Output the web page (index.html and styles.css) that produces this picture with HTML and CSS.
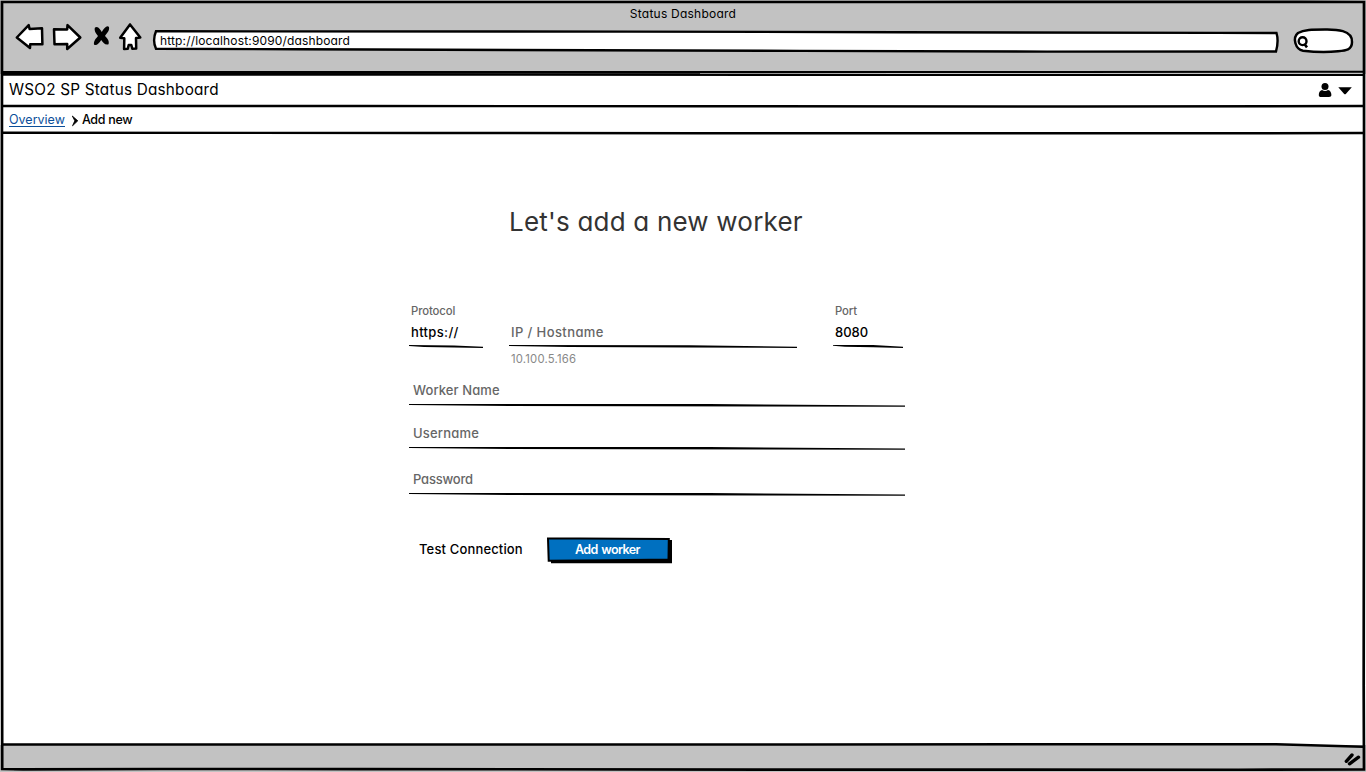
FILE: index.html
```html
<!DOCTYPE html>
<html lang="en">
<head>
<meta charset="utf-8">
<title>Status Dashboard</title>
<link rel="stylesheet" href="styles.css">
</head>
<body>
<div class="window">
  <header class="chrome">
    <div class="window-title"><span>Status Dashboard</span></div>
    <div class="toolbar">
      <svg class="nav" width="130" height="32" viewBox="14 21 130 32">
        <g fill="#fff" stroke="#000" stroke-width="2.5" stroke-linejoin="round">
          <path d="M16.8 37.5 28.7 25.2 29.6 29 42 28.3 42.4 44.3 30.2 44.2 30 48 Z"/>
          <path d="M80.3 37.5 67.5 25.2 67.2 29.4 54 29.3 54.5 44.2 67.2 44 67.2 49 Z"/>
          <path d="M130 24.4 120.2 37.7 124.3 38.2 124.1 49.1 127.8 48.8 128.7 45 131.3 45 132.3 48.8 136.2 48.6 136 38 140.3 37.5 Z"/>
        </g>
        <path d="M95 27.5C98 25.5 100 29 101.8 32 104 28 107 25 109 27 109.8 31 106.5 33.5 105 36 107.7 38.5 109.6 41.5 108.5 44.3 105.3 45.5 102.8 42.4 101.2 40 99 43.5 96 46.5 94 44.4 93.5 41 96 38.5 98 36 96 33.5 93.8 30.5 95 27.5Z"/>
      </svg>
      <div class="address">
        <svg class="sketch" width="1128" height="26" viewBox="152 28 1128 26"><path d="M156 31.3 C420 31.8 650 31.2 900 32.2 S1180 32.6 1276.5 33 C1278.3 39 1277.5 46 1276 51.5 C1100 51.8 980 51.8 800 50.9 S380 49.6 156 48.8 C153.4 43 154 36 156 31.3Z" fill="#fff" stroke="#000" stroke-width="2.4"/></svg>
        <span>http://localhost:9090/dashboard</span>
      </div>
      <svg class="search" width="64" height="30" viewBox="1292 26 64 30">
        <path d="M1298 33C1304 29.5 1312 29.5 1325 29.5 1336 29.3 1352.5 30 1352 42 1352 50 1346 50.5 1338 51.2 1325 52.6 1310 51.5 1303 50.7 1295.5 49.5 1292 38 1298 33Z" fill="#fff" stroke="#000" stroke-width="2.5"/>
        <circle cx="1302.6" cy="41.2" r="3.9" fill="#fff" stroke="#000" stroke-width="2.4"/>
        <path d="M1304.4 44 1307 47.4" stroke="#000" stroke-width="2.6"/>
      </svg>
    </div>
  </header>
  <div class="appbar">
    <div class="brand">WSO2 SP Status Dashboard</div>
    <svg class="user" width="36" height="18" viewBox="1317 81 36 18">
      <circle cx="1325" cy="86.5" r="3.5"/>
      <path d="M1322 90C1319.8 90.5 1318.8 92.5 1318.8 95 1318.8 96.5 1319.7 97 1321 97H1329C1330.5 97 1331.4 96.2 1331.4 95 1331.3 92.3 1330.3 90.5 1328 90 1326.2 91.2 1324 91.2 1322 90Z"/>
      <path d="M1338.3 87.2H1351.8L1345.8 94Q1345 94.7 1344.2 94Z"/>
    </svg>
  </div>
  <nav class="crumbs">
    <a class="crumb-link" href="#">Overview</a>
    <svg class="chevron" width="8" height="12" viewBox="71 115 8 12"><path d="M72.3 116 77.8 120.8 72.5 125.8 74.8 120.8Z" stroke="#000" stroke-width=".8" stroke-linejoin="round"/></svg>
    <span class="crumb-current">Add new</span>
  </nav>
  <main class="page">
    <h1 class="heading">Let's add a new worker</h1>
    <form class="form">
      <div class="row">
        <div class="field protocol">
          <div class="label">Protocol</div>
          <div class="value scheme">https://</div>
          <svg class="rule" width="74" height="4" viewBox="0 0 74 4"><path d="M0 0 45 .5 74 1.8V3.1L45 2.6 15 1.9 0 1Z"/></svg>
        </div>
        <div class="field host">
          <div class="label"></div>
          <div class="value hint spaced">IP / Hostname</div>
          <svg class="rule" width="288" height="4" viewBox="0 0 288 4"><path d="M0 0 180 .2 288 1.8V3L180 2.5 60 2 0 1Z"/></svg>
          <div class="example">10.100.5.166</div>
        </div>
        <div class="field port">
          <div class="label">Port</div>
          <div class="value">8080</div>
          <svg class="rule" width="70" height="4" viewBox="0 0 70 4"><path d="M0 0 40 0 70 1.8V3L40 2.3 12 1.8 0 .8Z"/></svg>
        </div>
      </div>
      <div class="field wide worker"><div class="value hint">Worker Name</div><svg class="rule" width="496" height="4" viewBox="0 0 496 4"><path d="M0 0 300 0 496 1.4V2.8L350 2.5 100 2 0 1Z"/></svg></div>
      <div class="field wide username"><div class="value hint">Username</div><svg class="rule" width="496" height="4" viewBox="0 0 496 4"><path d="M0 0 300 0 496 1.4V2.8L350 2.5 100 2 0 1Z"/></svg></div>
      <div class="field wide password"><div class="value hint">Password</div><svg class="rule" width="496" height="4" viewBox="0 0 496 4"><path d="M0 0 300 0 496 1.4V2.8L350 2.5 100 2 0 1Z"/></svg></div>
      <div class="actions">
        <span class="test">Test Connection</span>
        <div class="button">
          <svg class="sketch" width="126" height="28" viewBox="546 537 126 28">
            <path d="M551 540H672V563.3H551Z"/>
            <path d="M548 538.6 580 538.5 668.8 539 668.5 559.5 610 560.2 548.7 560.7Z" fill="#0070c0" stroke="#000" stroke-width="2"/>
          </svg>
          <span>Add worker</span>
        </div>
      </div>
    </form>
  </main>
  <footer class="status"></footer>
  <svg class="frame" width="1366" height="772" viewBox="0 0 1366 772" fill="none" stroke="#000">
    <path d="M2 2C300 1.6 600 2.2 900 2S1250 1.7 1364 2C1363.6 150 1364.5 260 1364 400S1363.4 650 1364 769.3C1200 770.3 1050 769.4 860 769.7S400 768.7 160 769 80 769.8 2.2 769C2.2 600 1.7 500 1.8 350S1.8 100 2 2Z" stroke-width="2.7"/>
    <path d="M3 72C200 71.6 400 71.6 700 72S1100 71.5 1363 71.8" stroke-width="2"/>
    <path d="M3 74.6C300 74.8 700 74.4 900 75S1250 75 1363 75" stroke-width="2.2"/>
    <path d="M3 72.6 240 72.9 700 73.4 240 74.3 3 74Z" fill="#000" stroke-width=".5"/>
    <path d="M3 106C200 106.4 500 105.5 700 106.2S1150 106.6 1363 106" stroke-width="2.4"/>
    <path d="M3 132.8C300 133.4 450 132.5 700 133.2S1150 133.5 1363 133" stroke-width="2.4"/>
    <path d="M3 744.4C300 745 500 743.8 800 744.4S1200 743.5 1276 744.3L1363 746.7" stroke-width="2.5"/>
    <path d="M1346.3 761.3 1352 755M1349.5 763.8 1358.5 757.2" stroke-width="3.4" stroke-linecap="round"/>
  </svg>
</div>
</body>
</html>
```
FILE: styles.css
```css
* { box-sizing: border-box; }
body { margin: 0; background: #fff; color: #000; font-family: Inter, "Open Sans", sans-serif; font-feature-settings: "cv11", "ss03"; font-size: 12.5px; }
svg { display: block; flex: none; }
.window { position: relative; width: 1366px; height: 772px; display: flex; flex-direction: column; overflow: hidden; white-space: nowrap; }
.frame { position: absolute; inset: 0; pointer-events: none; }
.chrome { height: 74px; background: #c2c2c2; }
.window-title { height: 21px; padding-top: 6px; line-height: 15px; text-align: center; font-size: 12px; letter-spacing: .23px; }
.toolbar { display: flex; padding-left: 14px; }
.address { position: relative; width: 1128px; height: 26px; margin: 7px 12px 0 8px; padding-left: 8px; line-height: 25px; font-size: 12px; letter-spacing: .15px; }
.sketch { position: absolute; left: 0; top: 0; }
.address span, .button span { position: relative; }
.search { margin-top: 5px; }
.appbar { height: 32px; display: flex; justify-content: space-between; padding: 0 13px 0 9px; }
.brand { line-height: 31px; font-size: 15.3px; letter-spacing: .21px; }
.user { margin-top: 7px; }
.crumbs { height: 27px; display: flex; padding-left: 9px; line-height: 27px; }
.crumb-link { height: 21px; color: #0b4f9a; text-decoration: none; border-bottom: 1px solid #0b4f9a; }
.chevron { margin: 9px 3px 0 6px; }
.crumb-current { letter-spacing: -.3px; font-weight: 450; }
.page { height: 612px; padding: 69px 0 0 409px; }
.heading { margin: 0 0 0 100px; height: 40px; line-height: 40px; font-size: 26px; font-weight: 400; letter-spacing: .2px; color: #333; }
.form { width: 496px; margin-top: 61px; }
.row { display: flex; height: 72px; }
.label { height: 16px; line-height: 16px; font-size: 11.3px; font-weight: 500; color: #666; padding-left: 2px; letter-spacing: -.1px; }
.value { height: 26px; line-height: 26px; font-size: 13px; padding-left: 2px; font-weight: 500; }
.scheme { letter-spacing: .35px; }
.hint { color: #666; }
.spaced { letter-spacing: .4px; }
.rule { fill: #000; }
.protocol { width: 74px; margin-right: 26px; }
.host { width: 288px; margin-right: 36px; }
.port { width: 70px; }
.example { line-height: 16px; font-size: 11.3px; letter-spacing: .2px; color: #888; padding-left: 2px; margin-top: 2px; }
.wide .value { height: 27px; padding-left: 4px; }
.worker { height: 43px; padding-top: 2px; letter-spacing: .1px; }
.username { height: 46px; padding-top: 2px; letter-spacing: .2px; }
.password { height: 43px; padding-top: 2px; letter-spacing: -.2px; }
.actions { display: flex; align-items: flex-start; margin-top: 30px; padding-left: 10px; }
.test { width: 127px; line-height: 24px; font-size: 13px; font-weight: 500; letter-spacing: .15px; }
.button { position: relative; width: 126px; height: 28px; padding-left: 29px; line-height: 25px; color: #fff; font-weight: 600; font-size: 12.5px; letter-spacing: -.6px; word-spacing: 1px; }
.status { height: 27px; background: #c2c2c2; }
```
